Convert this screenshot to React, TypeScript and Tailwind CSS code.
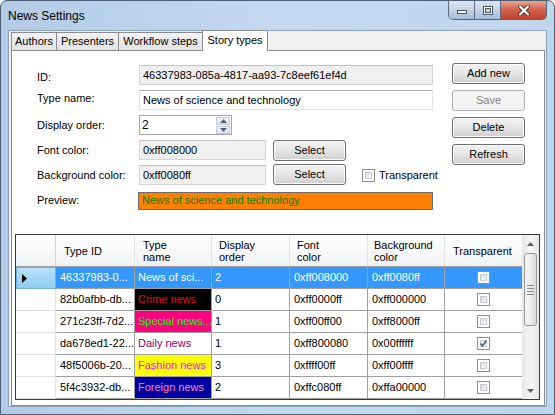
import React from 'react';

type Row = {
  id: string;
  name: string;
  order: string;
  font: string;
  bg: string;
  cell: string;
  checked?: boolean;
  selected?: boolean;
};

const rows: Row[] = [
  { id: '46337983-0...', name: 'News of sci...', order: '2', font: '0xff008000', bg: '0xff0080ff', cell: 'text-white', selected: true },
  { id: '82b0afbb-db...', name: 'Crime news', order: '0', font: '0xff0000ff', bg: '0xff000000', cell: 'bg-black text-[#ff0000]' },
  { id: '271c23ff-7d2...', name: 'Special news...', order: '1', font: '0xff00ff00', bg: '0xff8000ff', cell: 'bg-[#ff0080] text-[#00ff00]' },
  { id: 'da678ed1-22...', name: 'Daily news', order: '1', font: '0xff800080', bg: '0x00ffffff', cell: 'bg-white text-[#800080]', checked: true },
  { id: '48f5006b-20...', name: 'Fashion news', order: '3', font: '0xffff00ff', bg: '0xff00ffff', cell: 'bg-[#ffff00] text-[#ff00ff]' },
  { id: '5f4c3932-db...', name: 'Foreign news', order: '2', font: '0xffc080ff', bg: '0xffa00000', cell: 'bg-[#0000a0] text-[#ff80c0]' },
];

const Button = ({ label, disabled }: { label: string; disabled?: boolean }) => (
  <div
    className={
      disabled
        ? 'h-[21px] w-[73px] rounded-[3px] border border-[#adb2b5] bg-[#f4f4f4] flex items-center justify-center text-[#838383]'
        : 'h-[21px] w-[73px] rounded-[3px] border border-[#707070] bg-gradient-to-b from-[#f2f2f2] via-[#e6e6e6] to-[#cfcfcf] flex items-center justify-center shadow-[inset_0_0_0_1px_#fcfcfc]'
    }
  >
    {label}
  </div>
);

const CheckBox = ({ checked }: { checked?: boolean }) => (
  <div className="relative w-[13px] h-[13px] border border-[#8f8f8f] bg-white p-[2px]">
    <div className="w-full h-full border border-[#c8ccd1] bg-gradient-to-br from-[#dcdfe3] to-[#f8f8f8]" />
    {checked && (
      <svg className="absolute left-[1px] top-[1px]" width="9" height="9" viewBox="0 0 9 9">
        <path d="M1.5 4.5 L3.5 7 L7.5 1.5" fill="none" stroke="#4a5f97" strokeWidth="1.6" />
      </svg>
    )}
  </div>
);

const TextBox = ({ value, w, readOnly }: { value: string; w: string; readOnly?: boolean }) => (
  <div
    className={`h-[20px] ${w} border flex items-center px-[3px] whitespace-nowrap overflow-hidden ${
      readOnly ? 'bg-[#f0f0f0] border-[#d5d5d5] border-t-[#c2c2c2]' : 'bg-white border-[#e2e3ea] border-t-[#abadb3]'
    }`}
  >
    {value}
  </div>
);

const Label = ({ text, extra = '' }: { text: string; extra?: string }) => (
  <div className={`w-[102px] shrink-0 ${extra}`}>{text}</div>
);

export default function App() {
  return (
    <div className="w-[555px] h-[415px] bg-white font-['Liberation_Sans',Arial,sans-serif] text-[11px] text-black overflow-hidden">
      <div className="relative w-full h-full rounded-t-[7px] border border-[#4e6078] bg-gradient-to-r from-[#b3cbe6] via-[#c4d9ef] to-[#c0d6ed] flex flex-col">
        {/* title bar */}
        <div className="h-[29px] shrink-0 flex items-center pl-[7px] text-[12px]">News Settings</div>
        <div className="absolute top-0 right-[7px] flex h-[19px] rounded-b-[5px] border border-t-0 border-[#59677b] overflow-hidden">
          <div className="w-[26px] h-full border-r border-[#59677b] bg-gradient-to-b from-[#dbe6f3] via-[#c4d4e7] to-[#a8bcd6] flex items-end justify-center pb-[5px]">
            <div className="w-[10px] h-[4px] bg-white border border-[#4a5568]" />
          </div>
          <div className="w-[26px] h-full border-r border-[#59677b] bg-gradient-to-b from-[#dbe6f3] via-[#c4d4e7] to-[#a8bcd6] flex items-center justify-center">
            <div className="w-[10px] h-[9px] border border-[#4a5568] bg-white p-[1px]">
              <div className="w-full h-full border border-[#4a5568] bg-[#c6d4e6]" />
            </div>
          </div>
          <div className="w-[45px] h-full bg-gradient-to-b from-[#e8a493] via-[#d0604a] to-[#c13f2a] flex items-center justify-center">
            <svg width="14" height="11" viewBox="0 0 14 11">
              <path d="M3 1.5 L11 9.5 M11 1.5 L3 9.5" stroke="#5a2a22" strokeWidth="4" strokeLinecap="round" />
              <path d="M3 1.5 L11 9.5 M11 1.5 L3 9.5" stroke="#ffffff" strokeWidth="2.2" strokeLinecap="round" />
            </svg>
          </div>
        </div>

        {/* client area */}
        <div className="flex-1 mx-[7px] mb-[7px] border border-[#8ca2bd] bg-[#f0f0f0] flex flex-col pl-[2px] pr-[1px]">
          {/* tabs */}
          <div className="h-[19px] shrink-0 flex items-end">
            <div className="h-[18px] w-[46px] border border-b-0 border-[#898c95] bg-gradient-to-b from-[#f3f3f3] to-[#e2e2e2] flex items-center justify-center">Authors</div>
            <div className="h-[18px] w-[62px] border border-b-0 border-l-0 border-[#898c95] bg-gradient-to-b from-[#f3f3f3] to-[#e2e2e2] flex items-center justify-center">Presenters</div>
            <div className="h-[18px] w-[84px] border border-b-0 border-l-0 border-[#898c95] bg-gradient-to-b from-[#f3f3f3] to-[#e2e2e2] flex items-center justify-center">Workflow steps</div>
            <div className="relative z-10 -mb-[1px] h-[21px] w-[66px] -ml-[1px] border border-b-0 border-[#898c95] bg-white flex items-center justify-center pb-[2px]">Story types</div>
          </div>

          {/* tab page */}
          <div className="flex-1 border border-[#898c95] bg-white flex flex-col">
            <div className="h-[183px] shrink-0 flex pt-[12px]">
              <div className="w-[440px] pl-[25px] pt-[2px] flex flex-col gap-[5px]">
                <div className="flex items-center h-[20px]">
                  <Label text="ID:" extra="pt-[5px]" />
                  <TextBox value="46337983-085a-4817-aa93-7c8eef61ef4d" w="w-[294px]" readOnly />
                </div>
                <div className="flex items-center h-[20px]">
                  <Label text="Type name:" extra="-mt-[3px]" />
                  <TextBox value="News of science and technology" w="w-[294px]" />
                </div>
                <div className="flex items-center h-[20px]">
                  <Label text="Display order:" />
                  <div className="h-[20px] w-[93px] border border-[#a5a5a5] bg-white flex items-center pl-[2px] pr-[1px]">
                    <span className="flex-1 text-[12px]">2</span>
                    <div className="w-[14px] h-[17px] flex flex-col gap-[1px]">
                      <div className="flex-1 border border-[#c5c9d1] bg-gradient-to-b from-[#f5f6f8] to-[#dde1e7] flex items-center justify-center">
                        <svg width="7" height="4" viewBox="0 0 7 4"><path d="M0 4 L3.5 0 L7 4 Z" fill="#4d6185" /></svg>
                      </div>
                      <div className="flex-1 border border-[#c5c9d1] bg-gradient-to-b from-[#f5f6f8] to-[#dde1e7] flex items-center justify-center">
                        <svg width="7" height="4" viewBox="0 0 7 4"><path d="M0 0 L7 0 L3.5 4 Z" fill="#4d6185" /></svg>
                      </div>
                    </div>
                  </div>
                </div>
                <div className="flex items-center h-[20px]">
                  <Label text="Font color:" />
                  <TextBox value="0xff008000" w="w-[127px]" readOnly />
                  <div className="ml-[7px]"><Button label="Select" /></div>
                </div>
                <div className="flex items-center h-[20px]">
                  <Label text="Background color:" extra="pt-[1px]" />
                  <TextBox value="0xff0080ff" w="w-[127px]" readOnly />
                  <div className="ml-[7px] -mt-[2px]"><Button label="Select" /></div>
                  <div className="ml-[16px] flex items-center gap-[4px]">
                    <CheckBox />
                    <span>Transparent</span>
                  </div>
                </div>
                <div className="flex items-center h-[20px]">
                  <Label text="Preview:" extra="pt-[1px]" />
                  <div className="-ml-[1px] mt-[1px] h-[18px] w-[295px] border border-[#6d6d6d] bg-[#ff8000] text-[#008000] flex items-center px-[3px]">
                    News of science and technology
                  </div>
                </div>
              </div>
              <div className="flex flex-col gap-[6px]">
                <Button label="Add new" />
                <Button label="Save" disabled />
                <Button label="Delete" />
                <Button label="Refresh" />
              </div>
            </div>

            {/* data grid */}
            <div className="ml-[3px] w-[525px] h-[166px] border border-[#3a3a3a] flex overflow-hidden">
              <div className="w-[506px] flex flex-col">
                <div className="h-[32px] shrink-0 flex border-b border-[#a0a0a0] bg-gradient-to-b from-white to-[#f1f2f4]">
                  <div className="w-[40px] border-r border-[#d5d5d5]" />
                  <div className="w-[79px] border-r border-[#e3e3e3] pl-[8px] pt-[2px] flex items-center">Type ID</div>
                  <div className="w-[77px] border-r border-[#e3e3e3] pl-[8px] flex flex-col justify-center leading-[12px] pt-[1px]">
                    <span>Type</span>
                    <span>name</span>
                  </div>
                  <div className="w-[78px] border-r border-[#e3e3e3] pl-[7px] flex flex-col justify-center leading-[12px] pt-[1px]">
                    <span>Display</span>
                    <span>order</span>
                  </div>
                  <div className="w-[78px] border-r border-[#e3e3e3] pl-[7px] flex flex-col justify-center leading-[12px] pt-[1px]">
                    <span>Font</span>
                    <span>color</span>
                  </div>
                  <div className="w-[77px] border-r border-[#e3e3e3] pl-[6px] flex flex-col justify-center leading-[12px] pt-[1px]">
                    <span>Background</span>
                    <span>color</span>
                  </div>
                  <div className="w-[77px] pl-[8px] pt-[2px] flex items-center">Transparent</div>
                </div>
                {rows.map((r) => (
                  <div key={r.id} className="h-[22px] shrink-0 flex">
                    <div
                      className={
                        r.selected
                          ? 'w-[40px] border border-[#6fb2e0] bg-gradient-to-b from-[#b8e2fa] to-[#8fcdf0] flex items-center pl-[5px]'
                          : 'w-[40px] border-r border-b border-[#e2e2e2] bg-white'
                      }
                    >
                      {r.selected && (
                        <svg width="5" height="9" viewBox="0 0 5 9"><path d="M0 0 L5 4.5 L0 9 Z" fill="#000" /></svg>
                      )}
                    </div>
                    <div className={`w-[79px] border-r border-b border-[#a0a0a0] pl-[4px] flex items-center whitespace-nowrap overflow-hidden ${r.selected ? 'bg-[#3399ff] text-white' : 'bg-white'}`}>{r.id}</div>
                    <div className={`w-[77px] border-r border-b border-[#a0a0a0] pl-[3px] flex items-center whitespace-nowrap overflow-hidden ${r.selected ? 'bg-[#3399ff] text-white' : r.cell}`}>{r.name}</div>
                    <div className={`w-[78px] border-r border-b border-[#a0a0a0] pl-[3px] flex items-center ${r.selected ? 'bg-[#3399ff] text-white' : 'bg-white'}`}>{r.order}</div>
                    <div className={`w-[78px] border-r border-b border-[#a0a0a0] pl-[4px] flex items-center ${r.selected ? 'bg-[#3399ff] text-white' : 'bg-white'}`}>{r.font}</div>
                    <div className={`w-[77px] border-r border-b border-[#a0a0a0] pl-[4px] flex items-center ${r.selected ? 'bg-[#3399ff] text-white' : 'bg-white'}`}>{r.bg}</div>
                    <div className={`w-[77px] border-b border-[#a0a0a0] flex items-center justify-center ${r.selected ? 'bg-[#3399ff]' : 'bg-white'}`}>
                      <CheckBox checked={r.checked} />
                    </div>
                  </div>
                ))}
              </div>

              {/* scrollbar */}
              <div className="w-[17px] shrink-0 bg-gradient-to-r from-[#e6e6e6] via-[#f5f5f5] to-[#e6e6e6] flex flex-col">
                <div className="h-[17px] shrink-0 flex items-center justify-center">
                  <svg width="7" height="4" viewBox="0 0 7 4"><path d="M0 4 L3.5 0 L7 4 Z" fill="#606060" /></svg>
                </div>
                <div className="mx-[2px] mt-[1px] h-[73px] rounded-[3px] border border-[#979797] bg-gradient-to-r from-[#f4f4f4] via-[#ececec] to-[#d9d9d9] flex flex-col items-center justify-center gap-[2px]">
                  <div className="w-[7px] h-[1px] bg-[#8a8a8a]" />
                  <div className="w-[7px] h-[1px] bg-[#8a8a8a]" />
                  <div className="w-[7px] h-[1px] bg-[#8a8a8a]" />
                  <div className="w-[7px] h-[1px] bg-[#8a8a8a]" />
                </div>
                <div className="flex-1" />
                <div className="h-[17px] shrink-0 flex items-center justify-center">
                  <svg width="7" height="4" viewBox="0 0 7 4"><path d="M0 0 L7 0 L3.5 4 Z" fill="#606060" /></svg>
                </div>
              </div>
            </div>
          </div>
        </div>
      </div>
    </div>
  );
}
